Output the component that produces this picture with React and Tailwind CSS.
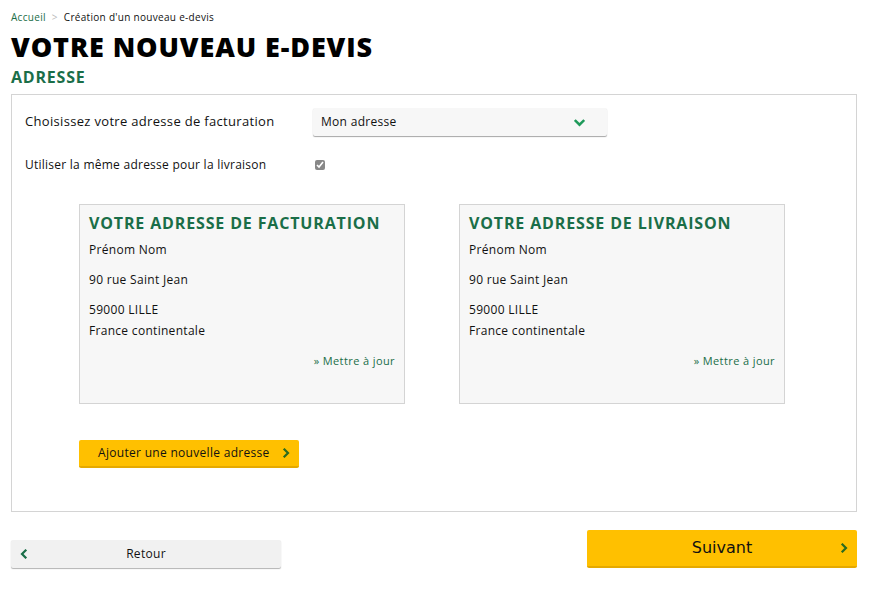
import React from 'react'

const Chevron = ({ dir = 'right', className = '' }) => (
    <svg viewBox="0 0 10 10" className={className} fill="none" stroke="currentColor" strokeWidth="2.2" strokeLinecap="square">
        {dir === 'right' && <path d="M3.5 1.5 L7 5 L3.5 8.5" />}
        {dir === 'left' && <path d="M6.5 1.5 L3 5 L6.5 8.5" />}
        {dir === 'down' && <path d="M1.5 3.5 L5 7 L8.5 3.5" />}
    </svg>
)

const AddressCard = ({ title }) => (
    <div className='w-[326px] h-[200px] bg-[#f7f7f7] border border-[#d4d4d4] px-[9px] pt-[8px] text-[12px] tracking-[0.3px] text-[#111]'>
        <h3 className='text-[16px] font-bold text-[#1a6e48] leading-[20px] tracking-[0.85px]'>{title}</h3>
        <p className='mt-[9px] leading-[15px]'>Prénom Nom</p>
        <p className='mt-[15px] leading-[15px]'>90 rue Saint Jean</p>
        <p className='mt-[15px] leading-[15px]'>59000 LILLE</p>
        <p className='mt-[6px] leading-[15px]'>France continentale</p>
        <p className='mt-[15px] leading-[15px] text-right text-[11px] tracking-[0.4px] text-[#1a6e48] pr-[0px]'>» Mettre à jour</p>
    </div>
)

export default function App() {
    return (
        <div className='bg-white min-h-[589px] w-[880px] px-[11px] pt-[10px] font-["Open_Sans",sans-serif] text-[#111]'>
            <div className='w-[846px]'>
                <div className='text-[10px] leading-[14px] flex items-center gap-[6px] tracking-[0.3px]'>
                    <span className='text-[#1a6e48]'>Accueil</span>
                    <span className='text-[#bbb]'>&gt;</span>
                    <span>Création d'un nouveau e-devis</span>
                </div>
                <h1 className='mt-[8px] text-[27px] leading-[30px] font-extrabold tracking-[0.9px] text-black'>VOTRE NOUVEAU E-DEVIS</h1>
                <h2 className='mt-[5px] text-[16px] leading-[20px] font-bold text-[#1a6e48] tracking-[0.8px]'>ADRESSE</h2>

                <div className='mt-[7px] border border-[#d4d4d4] h-[418px] pl-[13px] pt-[13px]'>
                    <div className='flex items-center'>
                        <span className='w-[288px] text-[13px] tracking-[0.32px]'>Choisissez votre adresse de facturation</span>
                        <div className='w-[294px] h-[28px] bg-[#f7f7f7] rounded-[2px] shadow-[0_1px_1px_rgba(0,0,0,0.35)] flex items-center justify-between pl-[8px] pr-[22px] text-[12px] tracking-[0.3px]'>
                            <span>Mon adresse</span>
                            <Chevron dir='down' className='w-[11px] h-[11px] text-[#1f9a5a]' />
                        </div>
                    </div>
                    <div className='flex items-center mt-[20px]'>
                        <span className='w-[290px] text-[12px] tracking-[0.25px]'>Utiliser la même adresse pour la livraison</span>
                        <input type='checkbox' defaultChecked className='w-[10px] h-[10px] accent-[#888]' />
                    </div>

                    <div className='flex gap-[54px] ml-[54px] mt-[30px]'>
                        <AddressCard title='VOTRE ADRESSE DE FACTURATION' />
                        <AddressCard title='VOTRE ADRESSE DE LIVRAISON' />
                    </div>

                    <button className='ml-[54px] mt-[36px] w-[220px] h-[28px] bg-[#ffc000] border-b-2 border-[#e5a900] rounded-[2px] flex items-center justify-between pl-[19px] pr-[8px] text-[12px] tracking-[0.3px] text-[#111]'>
                        <span>Ajouter une nouvelle adresse</span>
                        <Chevron className='w-[10px] h-[10px] text-[#2c6b1e]' />
                    </button>
                </div>

                <div className='flex justify-between items-end mt-[18px]'>
                    <button className='w-[270px] h-[28px] bg-[#f1f1f1] rounded-[2px] shadow-[0_1px_1px_rgba(0,0,0,0.3)] relative flex items-center justify-center text-[12px] tracking-[0.3px]'>
                        <Chevron dir='left' className='absolute left-[8px] w-[10px] h-[10px] text-[#1a6e48]' />
                        <span>Retour</span>
                    </button>
                    <button className='w-[270px] h-[38px] bg-[#ffc000] border-b-2 border-[#e5a900] rounded-[2px] relative flex items-center justify-center text-[16px] font-["DejaVu_Sans",sans-serif]'>
                        <span>Suivant</span>
                        <Chevron className='absolute right-[8px] w-[10px] h-[10px] text-[#2c6b1e]' />
                    </button>
                </div>
            </div>
        </div>
    )
}
